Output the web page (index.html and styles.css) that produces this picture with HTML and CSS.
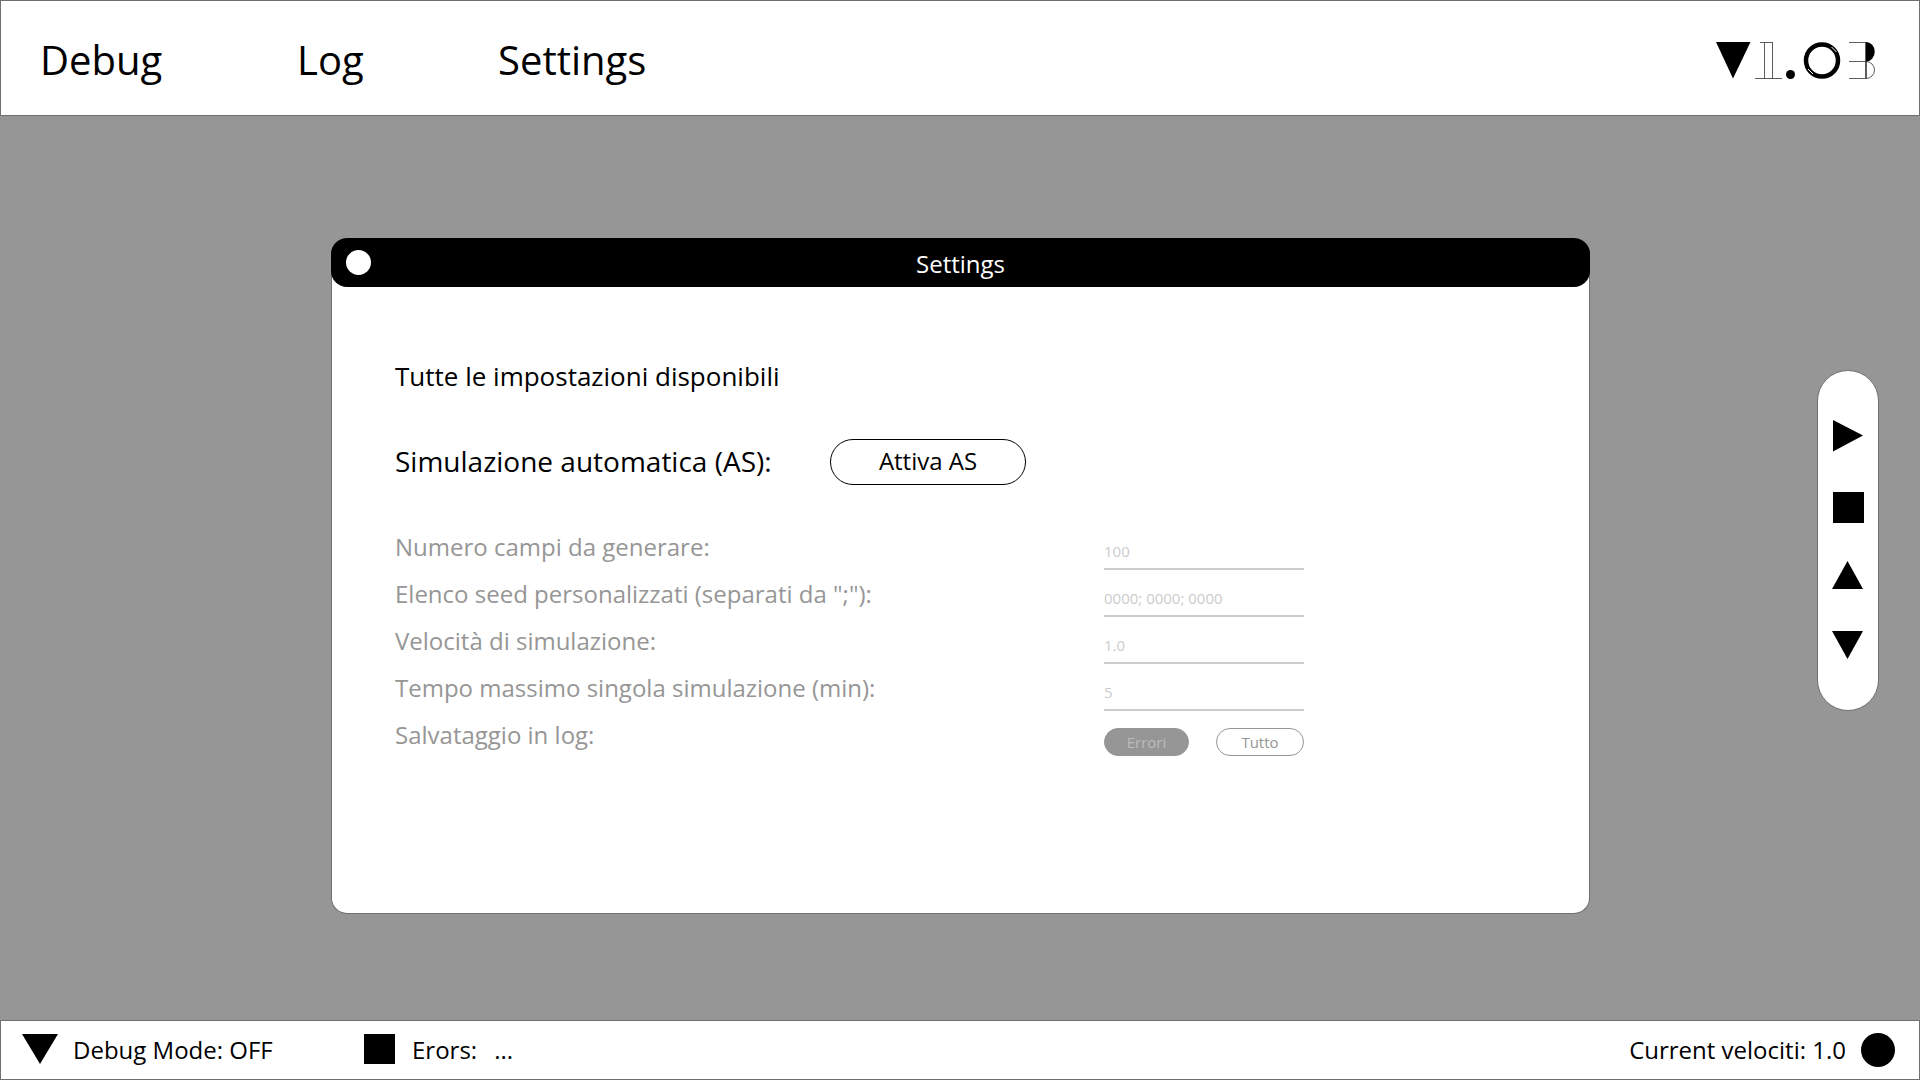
FILE: index.html
```html
<!DOCTYPE html>
<html lang="it">
<head>
<meta charset="utf-8">
<meta name="viewport" content="width=device-width, initial-scale=1">
<title>Settings</title>
<link rel="stylesheet" href="styles.css">
</head>
<body>
<header class="topbar">
  <nav class="menu">
    <a class="menu-debug" href="#debug">Debug</a>
    <a class="menu-log" href="#log">Log</a>
    <a href="#settings">Settings</a>
  </nav>
  <svg class="logo" viewBox="0 0 162 38" role="img" aria-label="V1.03">
    <path d="M1 1H35.500L18 37.500Z"/>
    <g fill="none" stroke="#333" stroke-width="0.800">
      <path d="M45 1.500H58M49.500 1.500V37.500M57.500 1.500V37.500M40 37.500H67"/>
      <path d="M134 1.500H151M134 20.500H151M134 37.500H151M150.500 1.500V37.500M151.500 20.500V37.500"/>
      <path d="M151 20.500A8.500 8.500 0 0 1 151 37.500"/>
    </g>
    <circle cx="75.500" cy="33.500" r="4.500"/>
    <circle cx="107" cy="19.500" r="16" fill="none" stroke="#000" stroke-width="4.500"/>
    <path d="M116.500 6L121.500 11M93 28L98 33" stroke="#fff" stroke-width="1"/>
    <path d="M151 1A8.500 9.500 0 0 1 151 20.500Z"/>
  </svg>
</header>

<main class="stage">
  <section class="window" aria-labelledby="window-title">
    <div class="titlebar">
      <button class="close" type="button" aria-label="Chiudi"></button>
      <h1 class="title" id="window-title">Settings</h1>
    </div>
    <form class="content">
      <p class="intro">Tutte le impostazioni disponibili</p>
      <div class="auto">
        <span class="auto-label" id="as-label">Simulazione automatica (AS):</span>
        <button class="pill" type="button" aria-describedby="as-label">Attiva AS</button>
      </div>
      <div class="fields">
        <div class="row">
          <label for="campi">Numero campi da generare:</label>
          <input id="campi" type="text" value="100" disabled>
        </div>
        <div class="row">
          <label for="seed">Elenco seed personalizzati (separati da ";"):</label>
          <input id="seed" type="text" value="0000; 0000; 0000" disabled>
        </div>
        <div class="row">
          <label for="velocita">Velocità di simulazione:</label>
          <input id="velocita" type="text" value="1.0" disabled>
        </div>
        <div class="row">
          <label for="tempo">Tempo massimo singola simulazione (min):</label>
          <input id="tempo" type="text" value="5" disabled>
        </div>
        <div class="row">
          <span class="row-label" id="log-label">Salvataggio in log:</span>
          <div class="choices" role="group" aria-labelledby="log-label">
            <button class="choice selected" type="button" disabled>Errori</button>
            <button class="choice" type="button" disabled>Tutto</button>
          </div>
        </div>
      </div>
    </form>
  </section>

  <aside class="controls">
    <button type="button" aria-label="Avvia"><svg width="32" height="34" viewBox="0 0 32 34"><path d="M1 0L31 15.500L1 31.500Z"/></svg></button>
    <button type="button" aria-label="Ferma"><svg width="32" height="31" viewBox="0 0 32 31"><path d="M1 0H32V31H1Z"/></svg></button>
    <button type="button" aria-label="Aumenta"><svg width="32" height="32" viewBox="0 0 32 32"><path d="M0 28L15.500 0L31 28Z"/></svg></button>
    <button type="button" aria-label="Diminuisci"><svg width="32" height="28" viewBox="0 0 32 28"><path d="M0 0H31L15.500 28Z"/></svg></button>
  </aside>
</main>

<footer class="statusbar">
  <div class="status status-debug">
    <svg width="36" height="32" viewBox="0 0 36 32"><path d="M0 0H36L18 30Z"/></svg>
    <span>Debug Mode: OFF</span>
  </div>
  <div class="status status-errors">
    <svg width="31" height="32" viewBox="0 0 31 32"><path d="M0 0H31V30H0Z"/></svg>
    <span>Erors:</span>
    <span>...</span>
  </div>
  <div class="status status-speed">
    <span>Current velociti: 1.0</span>
    <svg width="34" height="34" viewBox="0 0 34 34"><circle cx="17" cy="17" r="17"/></svg>
  </div>
</footer>
</body>
</html>
```
FILE: styles.css
```css
* {
  box-sizing: border-box;
}

body {
  margin: 0;
  min-height: 100vh;
  display: flex;
  flex-direction: column;
  background: #969696;
  color: #000;
  font-family: "Open Sans", "Noto Sans", sans-serif;
  font-size: 24px;
  line-height: 32px;
}

button,
input {
  font: inherit;
  color: inherit;
  background: none;
  border: 0;
  padding: 0;
}

svg {
  display: block;
  flex: none;
}

.topbar {
  display: flex;
  align-items: center;
  justify-content: space-between;
  padding: 30px 42px 26px 39px;
  border: 1px solid #707070;
  background: #fff;
}

.menu {
  display: flex;
  font-size: 40px;
  line-height: 58px;
}

.menu a {
  color: inherit;
  text-decoration: none;
}

.menu-debug {
  width: 257px;
}

.menu-log {
  width: 201px;
}

.logo {
  width: 162px;
  height: 38px;
}

.stage {
  flex: 1;
  display: grid;
  grid-template-columns: 1fr minmax(0, 1259px) 1fr;
  align-items: start;
  padding: 122px 41px 106px 42px;
}

.window {
  grid-column: 2;
  border-radius: 16px;
  background: #fff;
  border: 1px solid #707070;
  border-top: 0;
}

.titlebar {
  display: grid;
  grid-template-columns: 25px 1fr 25px;
  align-items: center;
  height: 49px;
  margin: 0 -1px;
  padding: 0 15px;
  border-radius: 16px;
  background: #000;
  color: #fff;
}

.close {
  width: 25px;
  height: 25px;
  border-radius: 50%;
  background: #fff;
}

.title {
  margin: 0;
  padding-top: 2px;
  font-size: 24px;
  font-weight: 400;
  text-align: center;
}

.content {
  padding: 71px 63px 155px;
}

.intro {
  margin: 0;
  font-size: 26px;
  line-height: 36px;
}

.auto {
  display: flex;
  align-items: center;
  margin-top: 45px;
}

.auto-label {
  width: 435px;
  padding-bottom: 2px;
  font-size: 28px;
  line-height: 40px;
}

.pill {
  width: 196px;
  height: 46px;
  padding-bottom: 2px;
  border: 1px solid #000;
  border-radius: 23px;
}

.fields {
  margin-top: 38px;
  color: #969696;
}

.row {
  display: grid;
  grid-template-columns: 709px 200px;
  height: 47px;
}

.row label,
.row-label {
  padding-top: 8px;
}

.row input {
  height: 47px;
  padding-top: 10px;
  border-bottom: 2px solid #ccc;
  border-radius: 0;
  color: #ccc;
  font-size: 15px;
}

.choices {
  display: flex;
  justify-content: space-between;
  align-items: end;
  padding-bottom: 2px;
}

.choice {
  width: 88px;
  height: 28px;
  border: 1px solid #969696;
  border-radius: 14px;
  font-size: 15px;
  line-height: 24px;
}

.choice.selected {
  width: 85px;
  background: #969696;
  color: #bbb;
}

.controls {
  grid-column: 3;
  justify-self: end;
  display: flex;
  flex-direction: column;
  align-items: center;
  gap: 38px;
  width: 62px;
  margin-top: 132px;
  padding: 49px 0 51px;
  border: 1px solid #707070;
  border-radius: 31px;
  background: #fff;
}

.statusbar {
  display: flex;
  align-items: center;
  padding: 12px 24px 12px 21px;
  border: 1px solid #707070;
  background: #fff;
}

.status {
  display: flex;
  align-items: center;
  gap: 15px;
}

.status-debug {
  width: 342px;
}

.status-errors {
  gap: 17px;
}

.status-speed {
  margin-left: auto;
}
```
